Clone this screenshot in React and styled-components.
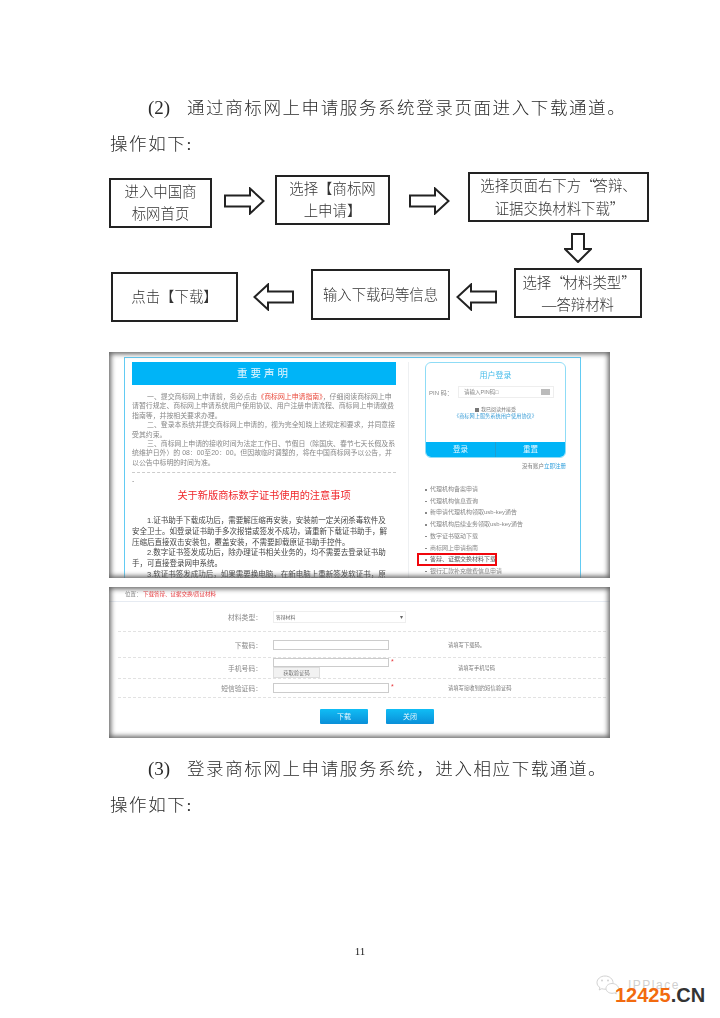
import React from 'react';
import styled, { createGlobalStyle } from 'styled-components';

const SERIF = '"Liberation Serif", "Noto Sans CJK SC", serif';
const SANS = '"Liberation Sans", "Noto Sans CJK SC", sans-serif';

const GlobalStyle = createGlobalStyle`
  html, body {
    margin: 0;
    padding: 0;
    background: #fff;
  }
`;

const NOTICE = [
  '一、提交商标网上申请前，务必点击|《商标网上申请指南》|，仔细阅读商标网上申',
  '-请暂行规定、商标网上申请系统用户使用协议、用户注册申请流程、商标网上申请缴费',
  '-指南等，并按相关要求办理。',
  '二、登录本系统并提交商标网上申请的，视为完全知晓上述规定和要求，并同意接',
  '-受其约束。',
  '三、商标网上申请的接收时间为法定工作日、节假日（除国庆、春节七天长假及系',
  '-统维护日外）的 08：00至20：00。但因故临时调整的，将在中国商标网予以公告，并',
  '-以公告中标明的时间为准。',
];

const CERT_NOTES = [
  '1.证书助手下载成功后，需要解压缩再安装，安装前一定关闭杀毒软件及',
  '-安全卫士。如登录证书助手多次报错或签发不成功，请重新下载证书助手，解',
  '-压缩后直接双击安装包，覆盖安装，不需要卸载原证书助手控件。',
  '2.数字证书签发成功后，除办理证书相关业务的，均不需要去登录证书助',
  '-手，可直接登录网申系统。',
  '3.软证书签发成功后，如果需要换电脑，在新电脑上重新签发软证书，原',
];

const LINKS = [
  '代理机构备案申请',
  '代理机构信息查询',
  '新申请代理机构领取usb-key通告',
  '代理机构后续业务领取usb-key通告',
  '数字证书驱动下载',
  '商标网上申请指南',
  '答辩、证据交换材料下载',
  '银行汇款补充缴费信息申请',
];

const Line = ({ text }) => {
  const flush = text.startsWith('-');
  const parts = (flush ? text.slice(1) : text).split('|');
  return (
    <TextLine $indent={!flush}>
      {parts.map((part, i) => (i === 1 ? <RedText key={i}>{part}</RedText> : part))}
    </TextLine>
  );
};

const Arrow = ({ flip, gap }) => (
  <ArrowSvg viewBox="0 0 41 28" $flip={flip} $gap={gap}>
    <path d="M1 8.5H26V1.5L39.5 14L26 26.5V19.5H1Z" fill="#fff" stroke="#222" strokeWidth="2" />
  </ArrowSvg>
);

const App = () => {
  return (
    <Page>
      <GlobalStyle />
      <Sheet>
        <Para $left={148}>
          <Num>(2)</Num>通过商标网上申请服务系统登录页面进入下载通道。
        </Para>
        <Para $left={110}>操作如下:</Para>

        <Flow>
          <FlowRow>
            <Node $w={103} $top={6}><div>进入中国商<br />标网首页</div></Node>
            <Arrow gap={12} />
            <Node $w={115} $top={3} $gap={10}><div>选择【商标网<br />上申请】</div></Node>
            <Arrow gap={19} />
            <Node $w={181} $gap={18}><div>选择页面右下方<Quote>“</Quote>答辩、<br />证据交换材料下载<Quote>”</Quote></div></Node>
          </FlowRow>
          <DownArrow viewBox="0 0 28 30">
            <path d="M8 1H20V16H27L14 29L1 16H8Z" fill="#fff" stroke="#222" strokeWidth="2" />
          </DownArrow>
          <FlowRow $second>
            <Node $w={127} $top={4} $high={50}><div>点击【下载】</div></Node>
            <Arrow flip gap={15} />
            <Node $w={139} $top={1} $high={51} $gap={17}><div>输入下载码等信息</div></Node>
            <Arrow flip gap={6} />
            <Node $w={128} $high={50} $gap={17}><div>选择<Quote>“</Quote>材料类型<Quote>”</Quote><br />—答辩材料</div></Node>
          </FlowRow>
        </Flow>

        <ShotOne>
          <ShotInner>
            <Frame>
              <NoticeCol>
                <NoticeHead>重要声明</NoticeHead>
                <NoticeText>
                  {NOTICE.map((t) => <Line key={t} text={t} />)}
                </NoticeText>
                <Dashes />
                <Tick>-</Tick>
                <CertTitle>关于新版商标数字证书使用的注意事项</CertTitle>
                <CertText>
                  {CERT_NOTES.map((t) => <Line key={t} text={t} />)}
                </CertText>
              </NoticeCol>
              <SideCol>
                <LoginBox>
                  <LoginTitle>用户登录</LoginTitle>
                  <PinRow>
                    <PinLabel>PIN 码：</PinLabel>
                    <PinInput>请输入PIN码□<KeyIcon /></PinInput>
                  </PinRow>
                  <AgreeRow><CheckMark />我已阅读并接受</AgreeRow>
                  <AgreeLink>《商标网上服务系统用户使用协议》</AgreeLink>
                  <LoginBar>
                    <LoginBtn>登录</LoginBtn>
                    <LoginBtn $divided>重置</LoginBtn>
                  </LoginBar>
                </LoginBox>
                <Register>没有账户<a>立即注册</a></Register>
                <LinkList>
                  {LINKS.map((l, i) => <LinkItem key={l} $marked={i === 6}>{l}</LinkItem>)}
                </LinkList>
              </SideCol>
            </Frame>
          </ShotInner>
        </ShotOne>

        <ShotTwo>
          <ShotInner>
            <Crumb>位置： <em>下载答辩、证据交换/质证材料</em></Crumb>
            <FormRow $h={30}>
              <FormLabel>材料类型：</FormLabel>
              <Select>答辩材料<i>▾</i></Select>
            </FormRow>
            <FormRow $h={26}>
              <FormLabel>下载码：</FormLabel>
              <TextBox />
              <Hint>请填写下载码。</Hint>
            </FormRow>
            <FormRow $h={21}>
              <FormLabel>手机号码：</FormLabel>
              <Stack>
                <TextBox $short><Star>*</Star></TextBox>
                <CodeBtn>获取验证码</CodeBtn>
              </Stack>
              <Hint $shift={10}>请填写手机号码</Hint>
            </FormRow>
            <FormRow $h={19}>
              <FormLabel>短信验证码：</FormLabel>
              <TextBox><Star>*</Star></TextBox>
              <Hint>请填写接收到的短信验证码</Hint>
            </FormRow>
            <Actions>
              <BlueBtn>下载</BlueBtn>
              <BlueBtn>关闭</BlueBtn>
            </Actions>
          </ShotInner>
        </ShotTwo>

        <Para $left={148} $top={12}>
          <Num>(3)</Num>登录商标网上申请服务系统，进入相应下载通道。
        </Para>
        <Para $left={110}>操作如下:</Para>

        <PageNo>11</PageNo>
      </Sheet>

      <Watermark>
        <svg width="24" height="20" viewBox="0 0 24 20" fill="none" stroke="#d2d2d2" strokeWidth="1">
          <path d="M9 1C4.5 1 1 4 1 7.6C1 9.7 2.2 11.5 4 12.7L3.2 15L5.8 13.7C6.8 14 7.8 14.2 9 14.2C13.5 14.2 17 11.2 17 7.6C17 4 13.5 1 9 1Z" />
          <path d="M16 8.5C12.7 8.5 10 10.7 10 13.4C10 16.1 12.7 18.3 16 18.3C16.8 18.3 17.6 18.2 18.3 17.9L20.3 19L19.7 17.1C21.4 16.2 22.5 14.9 22.5 13.4C22.5 10.7 19.3 8.5 16 8.5Z" fill="#fff" />
          <circle cx="6" cy="5.5" r="1" fill="#d2d2d2" stroke="none" />
          <circle cx="12" cy="5.5" r="1" fill="#d2d2d2" stroke="none" />
        </svg>
        <WmGhost>IPPlace</WmGhost>
        <WmBrand>12425<span>.CN</span></WmBrand>
      </Watermark>
    </Page>
  );
};

const Page = styled.div`
  position: relative;
  width: 720px;
  height: 1018px;
  overflow: hidden;
  background: #fff;
`;

const Sheet = styled.div`
  display: flex;
  flex-direction: column;
  padding-top: 89px;
  filter: blur(0.3px);
  font-family: ${SERIF};
  font-weight: 300;
  color: #2a2a2a;
`;

const Para = styled.div`
  margin: ${(p) => p.$top || 0}px 0 0 ${(p) => p.$left}px;
  height: 37px;
  line-height: 37px;
  font-size: 17.5px;
  letter-spacing: 1.6px;
  white-space: nowrap;
`;

const Num = styled.span`
  display: inline-block;
  width: 39px;
  letter-spacing: 0;
  font-size: 19px;
`;

const Flow = styled.div`
  display: flex;
  flex-direction: column;
  margin: 9px 0 0 109px;
`;

const FlowRow = styled.div`
  display: flex;
  align-items: flex-start;
  height: ${(p) => (p.$second ? 54 : 56)}px;
  margin-left: ${(p) => (p.$second ? 2 : 0)}px;
`;

const Node = styled.div`
  box-sizing: border-box;
  display: flex;
  align-items: center;
  justify-content: center;
  flex: none;
  text-align: center;
  width: ${(p) => p.$w}px;
  height: ${(p) => p.$high || 50}px;
  margin-top: ${(p) => p.$top || 0}px;
  margin-left: ${(p) => p.$gap || 0}px;
  border: 2px solid #222;
  font-size: 14.4px;
  line-height: 22px;
  color: #333;
  white-space: nowrap;
`;

const Quote = styled.span`
  font-family: "Noto Sans CJK SC", sans-serif;
  letter-spacing: -2px;
`;

const ArrowSvg = styled.svg`
  flex: none;
  width: 41px;
  height: 28px;
  margin: 15px 0 0 ${(p) => p.$gap}px;
  transform: ${(p) => (p.$flip ? 'scaleX(-1)' : 'none')};
`;

const DownArrow = styled.svg`
  display: block;
  width: 28px;
  height: 30px;
  margin: 5px 0 5px 455px;
`;

const ShotOne = styled.div`
  position: relative;
  box-sizing: border-box;
  width: 501px;
  height: 226px;
  margin: 30px 0 0 109px;
  overflow: hidden;
  background: #fff;
  &::after {
    content: '';
    position: absolute;
    inset: 0;
    box-shadow: inset 0 0 5px 2px #666;
  }
`;

const ShotTwo = styled(ShotOne)`
  height: 151px;
  margin-top: 9px;
`;

const ShotInner = styled.div`
  height: 100%;
  filter: blur(0.55px);
  font-family: ${SANS};
  font-weight: 400;
`;

const Frame = styled.div`
  display: flex;
  box-sizing: border-box;
  width: 457px;
  height: 240px;
  margin: 5px 0 0 15px;
  padding: 4px 0 0 7px;
  border: 1px solid #62cbf3;
`;

const NoticeCol = styled.div`
  flex: none;
  width: 264px;
`;

const NoticeHead = styled.div`
  height: 23px;
  line-height: 23px;
  text-align: center;
  background: #00b4f7;
  color: #e6f7fe;
  font-size: 10.5px;
  letter-spacing: 3px;
`;

const NoticeText = styled.div`
  margin-top: 7px;
  font-size: 6.9px;
  line-height: 9.4px;
  color: #888;
`;

const TextLine = styled.div`
  white-space: nowrap;
  padding-left: ${(p) => (p.$indent ? 15 : 0)}px;
`;

const RedText = styled.span`
  color: #ea4a3c;
`;

const Dashes = styled.div`
  margin-top: 5px;
  border-top: 1px dashed #ccc;
`;

const Tick = styled.div`
  height: 10px;
  margin-top: 3px;
  font-size: 7px;
  line-height: 10px;
  color: #888;
`;

const CertTitle = styled.div`
  margin-top: 3px;
  font-size: 10.2px;
  line-height: 14px;
  text-align: center;
  color: #f0282c;
`;

const CertText = styled.div`
  margin-top: 13px;
  font-size: 7.5px;
  line-height: 10.7px;
  color: #444;
`;

const SideCol = styled.div`
  flex: none;
  box-sizing: border-box;
  width: 170px;
  margin-left: 12px;
  padding-left: 16px;
  border-left: 1px solid #eef0f2;
`;

const LoginBox = styled.div`
  box-sizing: border-box;
  display: flex;
  flex-direction: column;
  width: 141px;
  height: 96px;
  border: 1px solid #8fdcf6;
  border-radius: 6px;
  overflow: hidden;
`;

const LoginTitle = styled.div`
  margin-top: 7px;
  font-size: 8px;
  line-height: 11px;
  text-align: center;
  color: #49bdea;
`;

const PinRow = styled.div`
  display: flex;
  align-items: center;
  margin-top: 5px;
  padding-left: 3px;
`;

const PinLabel = styled.div`
  width: 29px;
  font-size: 6px;
  color: #888;
`;

const PinInput = styled.div`
  display: flex;
  justify-content: space-between;
  align-items: center;
  box-sizing: border-box;
  width: 96px;
  height: 12px;
  padding: 0 3px 0 5px;
  border: 1px solid #eee;
  font-size: 5.5px;
  color: #888;
`;

const KeyIcon = styled.span`
  width: 9px;
  height: 6px;
  background: #bbb;
`;

const AgreeRow = styled.div`
  display: flex;
  justify-content: center;
  align-items: center;
  gap: 2px;
  margin-top: 8px;
  font-size: 5px;
  line-height: 7px;
  color: #777;
`;

const CheckMark = styled.span`
  width: 4px;
  height: 4px;
  background: #777;
`;

const AgreeLink = styled.div`
  text-align: center;
  font-size: 5.2px;
  line-height: 7px;
  color: #3d9fd8;
`;

const LoginBar = styled.div`
  display: flex;
  margin-top: auto;
  height: 15px;
  background: #00b4f7;
`;

const LoginBtn = styled.div`
  flex: 1;
  line-height: 15px;
  text-align: center;
  font-size: 7.5px;
  color: #e8f8ff;
  border-left: ${(p) => (p.$divided ? '1px solid #1f9ed1' : 'none')};
`;

const Register = styled.div`
  width: 141px;
  margin-top: 4px;
  text-align: right;
  font-size: 5.5px;
  line-height: 8px;
  color: #777;
  a {
    color: #2f9fdc;
  }
`;

const LinkList = styled.ul`
  list-style: none;
  margin: 14px 0 0;
  padding: 0;
  font-size: 6px;
  line-height: 11.7px;
  color: #888;
`;

const LinkItem = styled.li`
  position: relative;
  padding-left: 5px;
  white-space: nowrap;
  color: ${(p) => (p.$marked ? '#555' : '#888')};
  &::before {
    content: '';
    position: absolute;
    left: 0;
    top: 5px;
    width: 1.5px;
    height: 1.5px;
    background: #888;
  }
  &::after {
    content: ${(p) => (p.$marked ? "''" : 'none')};
    position: absolute;
    left: -8px;
    top: -1px;
    width: 80px;
    height: 12.5px;
    border: 2px solid #f0060c;
    box-sizing: border-box;
  }
`;

const Crumb = styled.div`
  box-sizing: border-box;
  height: 15px;
  padding-left: 16px;
  line-height: 15px;
  border-bottom: 1px solid #e6ebf2;
  font-size: 5.5px;
  color: #888;
  em {
    font-style: normal;
    color: #e8383c;
  }
`;

const FormRow = styled.div`
  box-sizing: border-box;
  display: grid;
  grid-template-columns: 144px 164px 1fr;
  column-gap: 11px;
  align-items: center;
  height: ${(p) => p.$h}px;
  margin: 0 4px 0 9px;
  border-bottom: 1px dashed #e2e2e2;
`;

const FormLabel = styled.div`
  text-align: right;
  font-size: 6.8px;
  color: #888;
`;

const Select = styled.div`
  display: flex;
  justify-content: space-between;
  align-items: center;
  box-sizing: border-box;
  width: 133px;
  height: 12px;
  padding: 0 2px;
  border: 1px solid #eee;
  font-size: 4.8px;
  color: #666;
  i {
    font-style: normal;
    font-size: 6px;
  }
`;

const TextBox = styled.div`
  position: relative;
  box-sizing: border-box;
  width: 116px;
  height: ${(p) => (p.$short ? 9 : 10)}px;
  border: 1px solid #ccc;
  background: #fff;
`;

const Star = styled.span`
  position: absolute;
  left: 117px;
  top: -2px;
  font-size: 7px;
  line-height: 9px;
  color: #e8383c;
`;

const Stack = styled.div`
  display: flex;
  flex-direction: column;
  align-self: start;
`;

const CodeBtn = styled.div`
  box-sizing: border-box;
  width: 47px;
  height: 11px;
  line-height: 10px;
  text-align: center;
  border: 1px solid #ddd;
  background: #f2f2f2;
  font-size: 5.3px;
  color: #777;
`;

const Hint = styled.div`
  padding-left: ${(p) => p.$shift || 0}px;
  font-size: 5.3px;
  color: #777;
  white-space: nowrap;
`;

const Actions = styled.div`
  display: flex;
  gap: 18px;
  margin: 11px 0 0 211px;
`;

const BlueBtn = styled.div`
  width: 48px;
  height: 15px;
  line-height: 15px;
  text-align: center;
  border-radius: 1px;
  background: linear-gradient(#10bdf5, #0a8fd8);
  font-size: 7px;
  color: #e8f8ff;
`;

const PageNo = styled.div`
  margin-top: 120px;
  font-size: 11px;
  line-height: 14px;
  text-align: center;
  color: #222;
`;

const Watermark = styled.div`
  position: absolute;
  left: 596px;
  top: 975px;
  width: 120px;
  height: 30px;
`;

const WmGhost = styled.div`
  position: absolute;
  left: 32px;
  top: 3px;
  font-family: ${SANS};
  font-size: 12px;
  letter-spacing: 1.5px;
  color: #d0d0d0;
`;

const WmBrand = styled.div`
  position: absolute;
  left: 19px;
  top: 8px;
  font-family: ${SANS};
  font-size: 20px;
  line-height: 24px;
  font-weight: 700;
  color: #f26a0f;
  span {
    color: #333;
  }
`;

export default App;
